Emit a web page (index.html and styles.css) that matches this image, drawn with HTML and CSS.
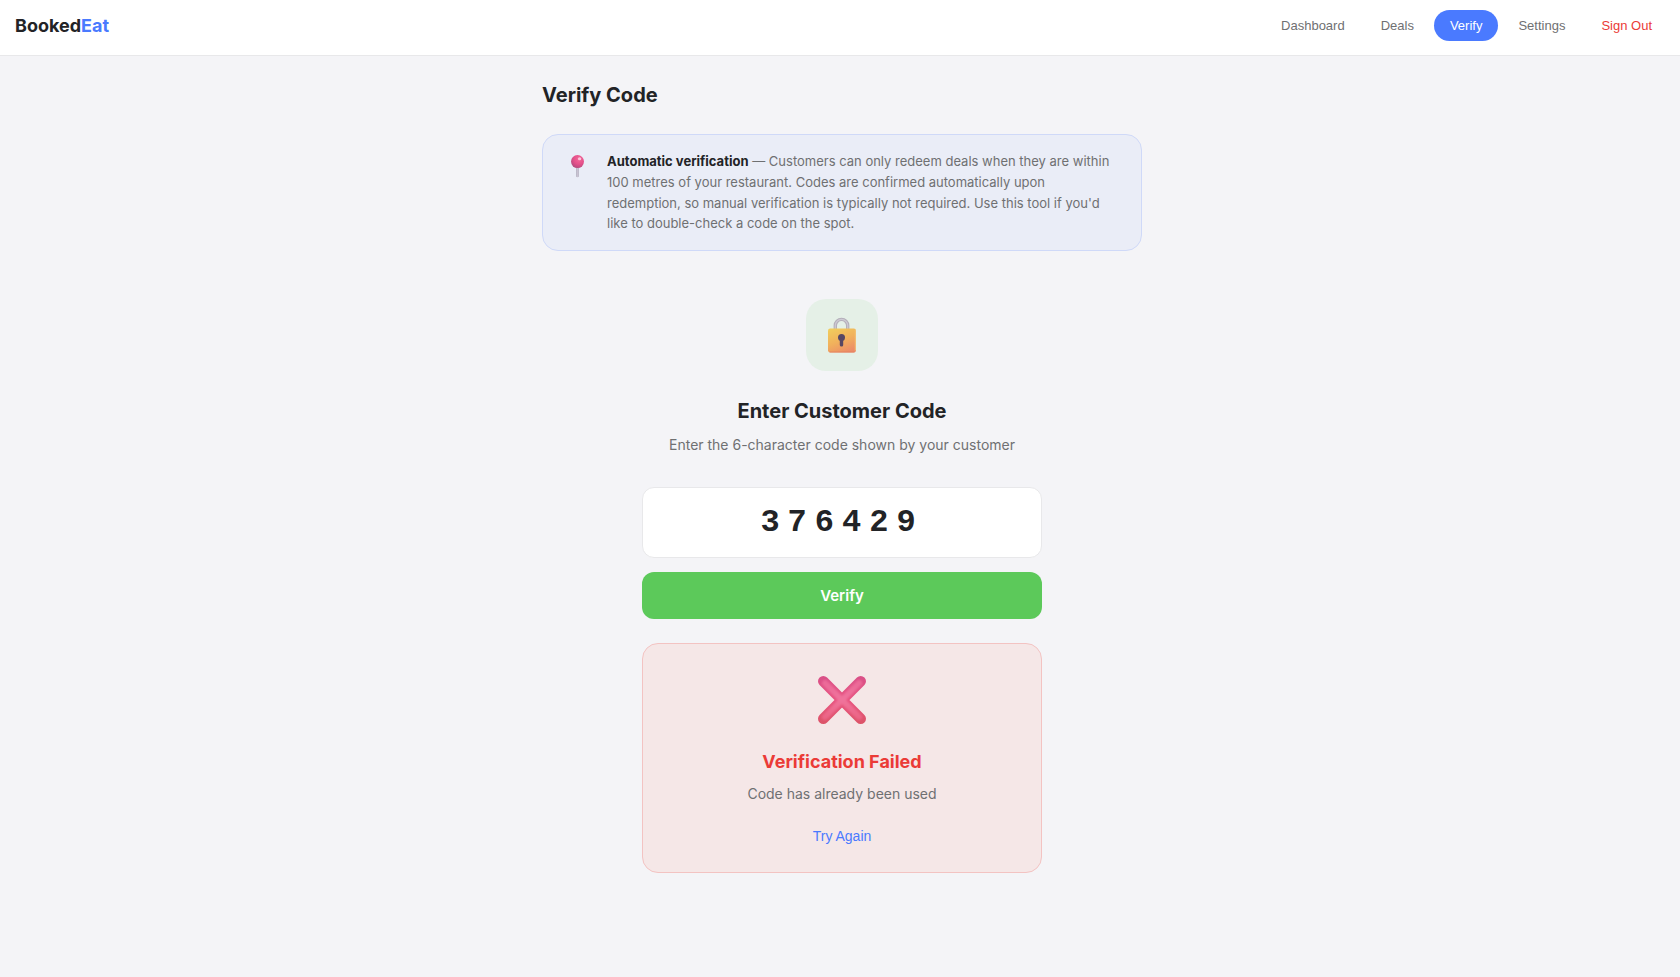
FILE: index.html
```html
<!DOCTYPE html>
<html lang="en">
<head>
<meta charset="utf-8">
<meta name="viewport" content="width=device-width, initial-scale=1">
<title>BookedEat – Verify Code</title>
<link rel="stylesheet" href="styles.css">
</head>
<body>
<header class="topbar">
  <div class="logo">Booked<span class="logo-accent">Eat</span></div>
  <nav class="nav">
    <button class="nav-item" type="button">Dashboard</button>
    <button class="nav-item" type="button">Deals</button>
    <button class="nav-item nav-item-active" type="button">Verify</button>
    <button class="nav-item" type="button">Settings</button>
    <button class="nav-item nav-item-danger" type="button">Sign Out</button>
  </nav>
</header>
<main class="page">
  <h1 class="title">Verify Code</h1>
  <section class="notice">
    <svg class="notice-icon" viewBox="0 0 28 32" aria-hidden="true">
      <defs>
        <radialGradient id="pin" cx="0.62" cy="0.3" r="0.75">
          <stop offset="0" stop-color="#f2689a"/>
          <stop offset="0.55" stop-color="#e4508a"/>
          <stop offset="1" stop-color="#b04a7c"/>
        </radialGradient>
        <linearGradient id="needle" x1="0" x2="1" y1="0" y2="0">
          <stop offset="0" stop-color="#9a93a6"/>
          <stop offset="0.5" stop-color="#c9c3d2"/>
          <stop offset="1" stop-color="#9f98ab"/>
        </linearGradient>
      </defs>
      <rect x="13.400" y="15" width="2.200" height="11.200" rx="1" fill="url(#needle)"/>
      <circle cx="14.500" cy="10.600" r="6.500" fill="url(#pin)"/>
      <ellipse cx="16.600" cy="7.800" rx="1.700" ry="1.500" fill="#fbc3d8"/>
    </svg>
    <p class="notice-text"><strong>Automatic verification</strong> — Customers can only redeem deals when they are within 100 metres of your restaurant. Codes are confirmed automatically upon redemption, so manual verification is typically not required. Use this tool if you'd like to double-check a code on the spot.</p>
  </section>
  <form class="verify">
    <div class="badge">
      <svg class="lock" viewBox="0 0 28 36" aria-hidden="true">
        <defs>
          <linearGradient id="body" x1="0.2" y1="0" x2="0.7" y2="1">
            <stop offset="0" stop-color="#f1cb5c"/>
            <stop offset="0.5" stop-color="#f1b15c"/>
            <stop offset="1" stop-color="#ec8b68"/>
          </linearGradient>
        </defs>
        <path d="M7.300 13V8.600a6.200 6.200 0 0 1 12.400 0V13" fill="none" stroke="#b4afba" stroke-width="3.400"/>
        <path d="M7.300 13V8.600a6.200 6.200 0 0 1 12.400 0V13" fill="none" stroke="#cdc9d3" stroke-width="1.200"/>
        <rect x="0" y="11.500" width="28" height="24" rx="2.200" fill="url(#body)"/>
        <path d="M27.300 13v20.500" fill="none" stroke="#f3c377" stroke-width="1"/>
        <path d="M1.500 35h25" stroke="#e37f5e" stroke-width="0.800"/>
        <circle cx="13.500" cy="20.600" r="3.500" fill="#574763"/>
        <rect x="11.800" y="21" width="3.400" height="8.600" rx="1.600" fill="#574763"/>
      </svg>
    </div>
    <h2 class="heading"><label for="code">Enter Customer Code</label></h2>
    <p class="hint">Enter the 6-character code shown by your customer</p>
    <input class="code" id="code" type="text" maxlength="6" value="376429" autocomplete="off">
    <button class="submit" type="button">Verify</button>
    <section class="result">
      <svg class="cross" viewBox="0 0 48 48" aria-hidden="true">
        <defs>
          <linearGradient id="edge" gradientUnits="userSpaceOnUse" x1="0" x2="0" y1="0" y2="48">
            <stop offset="0" stop-color="#d95088"/>
            <stop offset="0.5" stop-color="#e8537f"/>
            <stop offset="1" stop-color="#dc5468"/>
          </linearGradient>
          <linearGradient id="core" gradientUnits="userSpaceOnUse" x1="0" x2="0" y1="0" y2="48">
            <stop offset="0" stop-color="#ea6698"/>
            <stop offset="0.5" stop-color="#f0749c"/>
            <stop offset="1" stop-color="#ea607e"/>
          </linearGradient>
          <filter id="soft" x="-10%" y="-10%" width="120%" height="120%"><feGaussianBlur stdDeviation="1"/></filter>
        </defs>
        <path d="M5.300 5.300l37.400 37.400M42.700 5.300l-37.400 37.400" stroke="url(#edge)" stroke-width="10.600" stroke-linecap="round"/>
        <path d="M7 7l34 34M41 7l-34 34" stroke="url(#core)" stroke-width="6" stroke-linecap="round" filter="url(#soft)"/>
      </svg>
      <h3 class="result-title">Verification Failed</h3>
      <p class="result-text">Code has already been used</p>
      <button class="retry" type="button">Try Again</button>
    </section>
  </form>
</main>
</body>
</html>
```
FILE: styles.css
```css
* {
  box-sizing: border-box;
}

body {
  margin: 0;
  min-height: 100vh;
  background: #f4f4f7;
  color: #222326;
  font-family: Inter, "Liberation Sans", sans-serif;
  font-size: 14px;
}

h1, h2, h3, p {
  margin: 0;
}

button {
  border: 0;
  background: none;
  font-family: "Liberation Sans", Arial, sans-serif;
  cursor: pointer;
}

.topbar {
  display: flex;
  justify-content: space-between;
  align-items: center;
  padding: 10px 12px 14px 15px;
  background: #fff;
  border-bottom: 1px solid #e8e8ea;
}

.logo {
  font-size: 18px;
  font-weight: 700;
}

.logo-accent {
  color: #4a7aff;
}

.nav {
  display: flex;
  gap: 4px;
}

.nav-item {
  padding: 8px 16px;
  border-radius: 16px;
  color: #6f7072;
  font-size: 13px;
  font-weight: 500;
  line-height: 15px;
}

.nav-item-active {
  background: #4a7aff;
  color: #fff;
}

.nav-item-danger {
  color: #eb3b37;
}

.page {
  max-width: 604px;
  margin: 0 auto;
  padding: 27px 0 40px 4px;
}

.title {
  margin-bottom: 27px;
  font-size: 20px;
  font-weight: 700;
  line-height: 24px;
}

.notice {
  display: flex;
  align-items: flex-start;
  gap: 16px;
  padding: 16px 20px;
  background: #eaedf7;
  border: 1px solid #cfd9f8;
  border-radius: 16px;
}

.notice-icon {
  flex: none;
  width: 28px;
  height: 32px;
}

.notice-text {
  color: #6f7072;
  font-size: 13px;
  line-height: 1.6;
}

.notice-text strong {
  color: #222326;
  font-weight: 700;
}

.verify {
  display: flex;
  flex-direction: column;
  align-items: center;
  max-width: 400px;
  margin: 48px auto 0;
}

.badge {
  display: grid;
  place-items: center;
  width: 72px;
  height: 72px;
  margin-bottom: 28px;
  background: #e5f0e7;
  border-radius: 20px;
}

.lock {
  width: 28px;
  height: 36px;
}

.heading {
  margin-bottom: 12px;
  font-size: 20px;
  font-weight: 700;
  line-height: 24px;
}

.hint {
  margin-bottom: 32px;
  color: #6f7072;
  line-height: 20px;
}

.code {
  width: 100%;
  margin-bottom: 14px;
  padding: 17px 16px 16px;
  background: #fff;
  border: 1px solid #e8e8ea;
  border-radius: 12px;
  color: #222326;
  font-family: "Liberation Mono", "Courier New", monospace;
  font-size: 32px;
  font-weight: 700;
  line-height: 36px;
  letter-spacing: 8px;
  text-align: center;
}

.submit {
  width: 100%;
  margin-bottom: 24px;
  padding: 14px;
  background: #5cc95a;
  border-radius: 12px;
  color: #fff;
  font-family: Inter, "Liberation Sans", sans-serif;
  font-size: 15px;
  font-weight: 600;
  line-height: 19px;
}

.result {
  display: flex;
  flex-direction: column;
  align-items: center;
  width: 100%;
  padding: 32px 24px 28px;
  background: #f5e7e7;
  border: 1px solid #f3c3c2;
  border-radius: 16px;
}

.cross {
  width: 48px;
  height: 48px;
  margin-bottom: 26px;
}

.result-title {
  margin-bottom: 10px;
  color: #eb3b37;
  font-size: 18px;
  font-weight: 700;
  line-height: 24px;
}

.result-text {
  margin-bottom: 24px;
  color: #6f7072;
  line-height: 20px;
}

.retry {
  padding: 0;
  color: #4a7aff;
  font-size: 14px;
  line-height: 16px;
}
```
